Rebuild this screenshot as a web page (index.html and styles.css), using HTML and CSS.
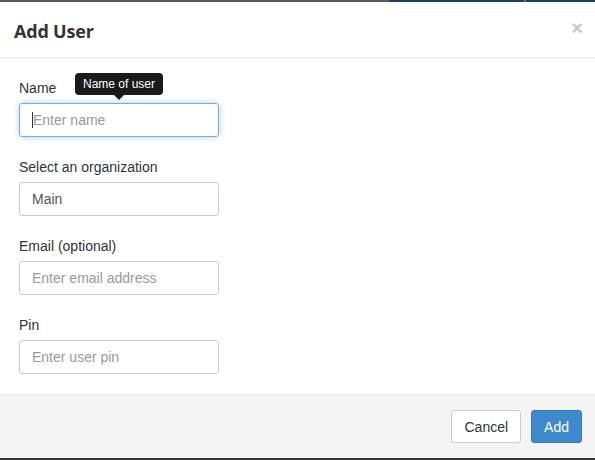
FILE: index.html
```html
<!DOCTYPE html>
<html>
<head>
<meta charset="utf-8">
<link rel="stylesheet" href="styles.css">
</head>
<body>
<div class="topstrip">
  <div class="ts-gray"></div>
  <div class="ts-navy1"></div>
  <div class="ts-sep"></div>
  <div class="ts-navy2"></div>
</div>
<div class="modal">
  <div class="modal-header">
    <h4 class="modal-title">Add User</h4>
    <span class="close">×</span>
  </div>
  <div class="modal-body">
    <div class="form-group">
      <label class="label">Name</label>
      <div class="tooltip">Name of user</div>
      <div class="input focus"><span class="caret"></span><span class="ph">Enter name</span></div>
    </div>
    <div class="form-group">
      <label class="label">Select an organization</label>
      <div class="input"><span class="val">Main</span></div>
    </div>
    <div class="form-group">
      <label class="label">Email (optional)</label>
      <div class="input"><span class="ph">Enter email address</span></div>
    </div>
    <div class="form-group last">
      <label class="label">Pin</label>
      <div class="input"><span class="ph">Enter user pin</span></div>
    </div>
  </div>
  <div class="modal-footer">
    <button class="btn btn-default">Cancel</button>
    <button class="btn btn-primary">Add</button>
  </div>
</div>
<div class="bottomstrip"></div>
</body>
</html>
```

FILE: styles.css
```css
html, body {
  margin: 0;
  padding: 0;
  background: #fff;
}
body {
  font-family: "Liberation Sans", Arial, sans-serif;
  font-size: 14px;
  color: #333;
  width: 595px;
  height: 460px;
  overflow: hidden;
}
.topstrip {
  display: flex;
  height: 2px;
}
.ts-gray { width: 389px; background: #5a5a5a; }
.ts-navy1 { width: 135px; background: #1d3e5c; }
.ts-sep { width: 2px; background: #6a6a6a; }
.ts-navy2 { flex: 1; background: #1d3e5c; }

.modal {
  display: flex;
  flex-direction: column;
}
.modal-header {
  height: 55px;
  border-bottom: 1px solid #e5e5e5;
  display: flex;
  align-items: center;
  justify-content: space-between;
  padding: 0 14px;
}
.modal-title {
  margin: 0;
  font-family: "Open Sans", "Liberation Sans", sans-serif;
  font-weight: 700;
  font-size: 18px;
  color: #333;
  letter-spacing: -0.2px;
  margin-top: 2px;
}
.close {
  font-family: "Liberation Sans", Arial, sans-serif;
  font-size: 20px;
  font-weight: 700;
  color: #c8c8c8;
  line-height: 1;
  margin-right: -2px;
  margin-top: -4px;
}
.modal-body {
  padding: 20px 19px 20px;
}
.form-group {
  position: relative;
  margin-bottom: 20px;
}
.form-group.last {
  margin-bottom: 0;
}
.label {
  display: block;
  line-height: 20px;
  margin-bottom: 5px;
  color: #333;
}
.input {
  box-sizing: border-box;
  width: 200px;
  height: 34px;
  border: 1px solid #ccc;
  border-radius: 3px;
  padding: 0 12px;
  display: flex;
  align-items: center;
  font-size: 14px;
}
.input.focus {
  border-color: #66afe9;
  box-shadow: 0 0 6px rgba(102, 175, 233, 0.55);
}
.ph { color: #999; }
.val { color: #555; }
.caret {
  display: inline-block;
  width: 1px;
  height: 16px;
  background: #333;
  margin-right: 0;
}
.tooltip {
  position: absolute;
  left: 56px;
  top: -5px;
  height: 22px;
  box-sizing: border-box;
  padding: 0 8px;
  background: #1a1a1a;
  color: #fff;
  font-size: 12px;
  line-height: 22px;
  border-radius: 4px;
}
.tooltip::after {
  content: "";
  position: absolute;
  left: 50%;
  margin-left: -5px;
  bottom: -5px;
  border-left: 5px solid transparent;
  border-right: 5px solid transparent;
  border-top: 5px solid #1a1a1a;
}
.modal-footer {
  border-top: 1px solid #e5e5e5;
  background: #f4f4f4;
  height: 63px;
  box-sizing: content-box;
  display: flex;
  justify-content: flex-end;
  align-items: flex-start;
  gap: 10px;
  padding: 0 13px 0 0;
}
.btn {
  margin-top: 15px;
  height: 33px;
  box-sizing: border-box;
  padding: 0 12px;
  font-family: "Liberation Sans", Arial, sans-serif;
  font-size: 14px;
  border-radius: 3px;
  border: 1px solid transparent;
}
.btn-default {
  background: #fff;
  border-color: #ccc;
  color: #333;
}
.btn-primary {
  background: #3d89cc;
  border-color: #367dbd;
  color: #fff;
}
.bottomstrip {
  height: 2px;
  background: #333;
}
```
